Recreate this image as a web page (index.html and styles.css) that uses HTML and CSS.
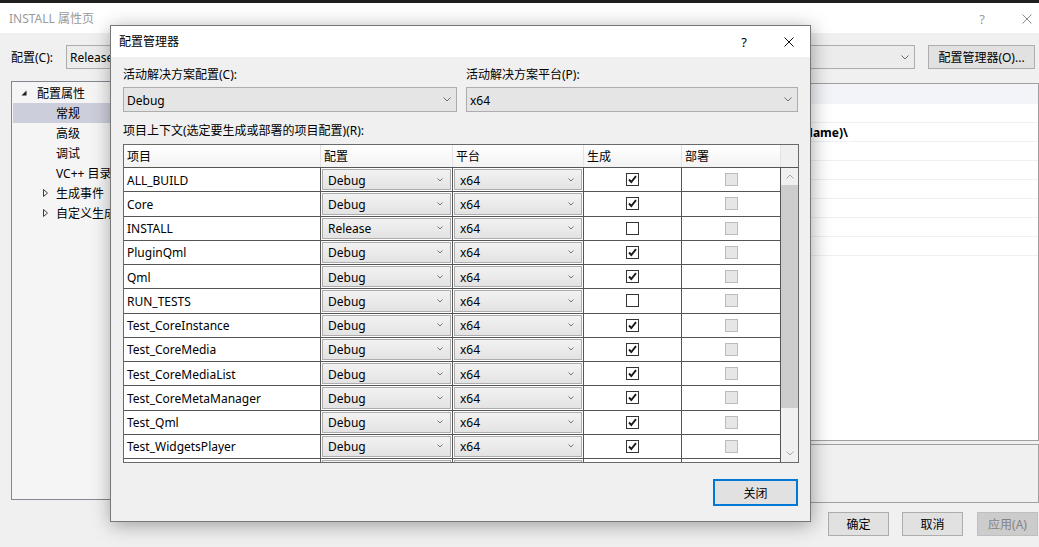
FILE: index.html
```html
<!DOCTYPE html>
<html lang="zh-CN">
<head>
<meta charset="utf-8">
<title>INSTALL 属性页</title>
<link rel="stylesheet" href="styles.css">
</head>
<body>
<div class="topstrip"></div>
<div class="win">
  <div class="win-title">
    <span class="win-title-text">INSTALL 属性页</span>
    <span class="win-help">?</span>
    <svg class="win-close" width="10" height="10" viewBox="0 0 10 10"><path d="M0.5 0.5 L9.5 9.5 M9.5 0.5 L0.5 9.5" stroke="#8a8a8a" stroke-width="1" fill="none"/></svg>
  </div>
  <div class="win-body">
    <div class="cfg-row">
      <span class="cfg-label">配置(C):</span>
      <div class="combo combo-main"><span class="combo-main-text">Release</span><svg class="chev" width="8" height="5" viewBox="0 0 8 5"><path d="M0.5 0.5 L4 4 L7.5 0.5" stroke="#6d6d6d" fill="none"/></svg></div>
      <button class="btn btn-cfgmgr">配置管理器(O)...</button>
    </div>
    <div class="main-row">
      <div class="tree">
        <div class="tree-item lvl0"><svg class="tri-open" width="6" height="6" viewBox="0 0 6 6"><polygon points="5.5,0.5 5.5,5.5 0.5,5.5" fill="#1e1e1e"/></svg><span class="tl">配置属性</span></div>
        <div class="tree-item lvl1 selected"><span class="tl">常规</span></div>
        <div class="tree-item lvl1"><span class="tl">高级</span></div>
        <div class="tree-item lvl1"><span class="tl">调试</span></div>
        <div class="tree-item lvl1"><span class="tl">VC++ 目录</span></div>
        <div class="tree-item lvl1c"><svg class="tri-closed" width="5" height="8" viewBox="0 0 5 8"><polygon points="0.5,0.5 4.5,4 0.5,7.5" fill="none" stroke="#3c3c3c"/></svg><span class="tl">生成事件</span></div>
        <div class="tree-item lvl1c"><svg class="tri-closed" width="5" height="8" viewBox="0 0 5 8"><polygon points="0.5,0.5 4.5,4 0.5,7.5" fill="none" stroke="#3c3c3c"/></svg><span class="tl">自定义生成步骤</span></div>
      </div>
      <div class="right-col">
        <div class="grid">
          <div class="grid-cat"></div>
          <div class="grid-row"></div>
          <div class="grid-row"><span class="gval bold">$(ConfigurationName)\</span></div>
          <div class="grid-row"></div>
          <div class="grid-row"></div>
          <div class="grid-row"></div>
          <div class="grid-row"></div>
          <div class="grid-row"></div>
          <div class="grid-row"></div>
        </div>
        <div class="desc"></div>
      </div>
    </div>
    <div class="btn-row">
      <button class="btn btn-main">确定</button>
      <button class="btn btn-main btn-cancel">取消</button>
      <button class="btn btn-main btn-disabled">应用(A)</button>
    </div>
  </div>
</div>

<div class="dialog">
  <div class="dlg-title">
    <span class="dlg-title-text">配置管理器</span>
    <span class="dlg-help">?</span>
    <svg class="dlg-close" width="10" height="10" viewBox="0 0 10 10"><path d="M0.5 0.5 L9.5 9.5 M9.5 0.5 L0.5 9.5" stroke="#111" stroke-width="1" fill="none"/></svg>
  </div>
  <div class="dlg-body">
    <div class="sol-row">
      <div class="sol-col sol-left">
        <div class="lbl">活动解决方案配置(C):</div>
        <div class="combo combo-sol"><span>Debug</span><svg class="chev" width="8" height="5" viewBox="0 0 8 5"><path d="M0.5 0.5 L4 4 L7.5 0.5" stroke="#6d6d6d" fill="none"/></svg></div>
      </div>
      <div class="sol-col sol-right">
        <div class="lbl">活动解决方案平台(P):</div>
        <div class="combo combo-sol"><span>x64</span><svg class="chev" width="8" height="5" viewBox="0 0 8 5"><path d="M0.5 0.5 L4 4 L7.5 0.5" stroke="#6d6d6d" fill="none"/></svg></div>
      </div>
    </div>
    <div class="ctx-label">项目上下文(选定要生成或部署的项目配置)(R):</div>
    <div class="ptable">
      <div class="phead">
        <div class="hc c1">项目</div>
        <div class="hc c2">配置</div>
        <div class="hc c3">平台</div>
        <div class="hc c4">生成</div>
        <div class="hc c5">部署</div>
        <div class="hcorner"></div>
      </div>
      <div class="pbody">
        <div class="prows">
          <div class="prow"><div class="pc c1 pname">ALL_BUILD</div><div class="pc c2 pcombo"><div class="cc"><span>Debug</span><svg width="6" height="4" viewBox="0 0 6 4"><path d="M0.5 0.5 L3 3 L5.5 0.5" stroke="#777" fill="none"/></svg></div></div><div class="pc c3 pcombo"><div class="cc"><span>x64</span><svg width="6" height="4" viewBox="0 0 6 4"><path d="M0.5 0.5 L3 3 L5.5 0.5" stroke="#777" fill="none"/></svg></div></div><div class="pc c4 pchk"><span class="cb on"><svg width="11" height="11" viewBox="0 0 11 11"><path d="M2 5.5 L4.3 8 L9 2.2" stroke="#1a1a1a" stroke-width="1.9" fill="none"/></svg></span></div><div class="pc c5 pchk"><span class="cb dis"></span></div></div>
          <div class="prow"><div class="pc c1 pname">Core</div><div class="pc c2 pcombo"><div class="cc"><span>Debug</span><svg width="6" height="4" viewBox="0 0 6 4"><path d="M0.5 0.5 L3 3 L5.5 0.5" stroke="#777" fill="none"/></svg></div></div><div class="pc c3 pcombo"><div class="cc"><span>x64</span><svg width="6" height="4" viewBox="0 0 6 4"><path d="M0.5 0.5 L3 3 L5.5 0.5" stroke="#777" fill="none"/></svg></div></div><div class="pc c4 pchk"><span class="cb on"><svg width="11" height="11" viewBox="0 0 11 11"><path d="M2 5.5 L4.3 8 L9 2.2" stroke="#1a1a1a" stroke-width="1.9" fill="none"/></svg></span></div><div class="pc c5 pchk"><span class="cb dis"></span></div></div>
          <div class="prow"><div class="pc c1 pname">INSTALL</div><div class="pc c2 pcombo"><div class="cc"><span>Release</span><svg width="6" height="4" viewBox="0 0 6 4"><path d="M0.5 0.5 L3 3 L5.5 0.5" stroke="#777" fill="none"/></svg></div></div><div class="pc c3 pcombo"><div class="cc"><span>x64</span><svg width="6" height="4" viewBox="0 0 6 4"><path d="M0.5 0.5 L3 3 L5.5 0.5" stroke="#777" fill="none"/></svg></div></div><div class="pc c4 pchk"><span class="cb"></span></div><div class="pc c5 pchk"><span class="cb dis"></span></div></div>
          <div class="prow"><div class="pc c1 pname">PluginQml</div><div class="pc c2 pcombo"><div class="cc"><span>Debug</span><svg width="6" height="4" viewBox="0 0 6 4"><path d="M0.5 0.5 L3 3 L5.5 0.5" stroke="#777" fill="none"/></svg></div></div><div class="pc c3 pcombo"><div class="cc"><span>x64</span><svg width="6" height="4" viewBox="0 0 6 4"><path d="M0.5 0.5 L3 3 L5.5 0.5" stroke="#777" fill="none"/></svg></div></div><div class="pc c4 pchk"><span class="cb on"><svg width="11" height="11" viewBox="0 0 11 11"><path d="M2 5.5 L4.3 8 L9 2.2" stroke="#1a1a1a" stroke-width="1.9" fill="none"/></svg></span></div><div class="pc c5 pchk"><span class="cb dis"></span></div></div>
          <div class="prow"><div class="pc c1 pname">Qml</div><div class="pc c2 pcombo"><div class="cc"><span>Debug</span><svg width="6" height="4" viewBox="0 0 6 4"><path d="M0.5 0.5 L3 3 L5.5 0.5" stroke="#777" fill="none"/></svg></div></div><div class="pc c3 pcombo"><div class="cc"><span>x64</span><svg width="6" height="4" viewBox="0 0 6 4"><path d="M0.5 0.5 L3 3 L5.5 0.5" stroke="#777" fill="none"/></svg></div></div><div class="pc c4 pchk"><span class="cb on"><svg width="11" height="11" viewBox="0 0 11 11"><path d="M2 5.5 L4.3 8 L9 2.2" stroke="#1a1a1a" stroke-width="1.9" fill="none"/></svg></span></div><div class="pc c5 pchk"><span class="cb dis"></span></div></div>
          <div class="prow"><div class="pc c1 pname">RUN_TESTS</div><div class="pc c2 pcombo"><div class="cc"><span>Debug</span><svg width="6" height="4" viewBox="0 0 6 4"><path d="M0.5 0.5 L3 3 L5.5 0.5" stroke="#777" fill="none"/></svg></div></div><div class="pc c3 pcombo"><div class="cc"><span>x64</span><svg width="6" height="4" viewBox="0 0 6 4"><path d="M0.5 0.5 L3 3 L5.5 0.5" stroke="#777" fill="none"/></svg></div></div><div class="pc c4 pchk"><span class="cb"></span></div><div class="pc c5 pchk"><span class="cb dis"></span></div></div>
          <div class="prow"><div class="pc c1 pname">Test_CoreInstance</div><div class="pc c2 pcombo"><div class="cc"><span>Debug</span><svg width="6" height="4" viewBox="0 0 6 4"><path d="M0.5 0.5 L3 3 L5.5 0.5" stroke="#777" fill="none"/></svg></div></div><div class="pc c3 pcombo"><div class="cc"><span>x64</span><svg width="6" height="4" viewBox="0 0 6 4"><path d="M0.5 0.5 L3 3 L5.5 0.5" stroke="#777" fill="none"/></svg></div></div><div class="pc c4 pchk"><span class="cb on"><svg width="11" height="11" viewBox="0 0 11 11"><path d="M2 5.5 L4.3 8 L9 2.2" stroke="#1a1a1a" stroke-width="1.9" fill="none"/></svg></span></div><div class="pc c5 pchk"><span class="cb dis"></span></div></div>
          <div class="prow"><div class="pc c1 pname">Test_CoreMedia</div><div class="pc c2 pcombo"><div class="cc"><span>Debug</span><svg width="6" height="4" viewBox="0 0 6 4"><path d="M0.5 0.5 L3 3 L5.5 0.5" stroke="#777" fill="none"/></svg></div></div><div class="pc c3 pcombo"><div class="cc"><span>x64</span><svg width="6" height="4" viewBox="0 0 6 4"><path d="M0.5 0.5 L3 3 L5.5 0.5" stroke="#777" fill="none"/></svg></div></div><div class="pc c4 pchk"><span class="cb on"><svg width="11" height="11" viewBox="0 0 11 11"><path d="M2 5.5 L4.3 8 L9 2.2" stroke="#1a1a1a" stroke-width="1.9" fill="none"/></svg></span></div><div class="pc c5 pchk"><span class="cb dis"></span></div></div>
          <div class="prow"><div class="pc c1 pname">Test_CoreMediaList</div><div class="pc c2 pcombo"><div class="cc"><span>Debug</span><svg width="6" height="4" viewBox="0 0 6 4"><path d="M0.5 0.5 L3 3 L5.5 0.5" stroke="#777" fill="none"/></svg></div></div><div class="pc c3 pcombo"><div class="cc"><span>x64</span><svg width="6" height="4" viewBox="0 0 6 4"><path d="M0.5 0.5 L3 3 L5.5 0.5" stroke="#777" fill="none"/></svg></div></div><div class="pc c4 pchk"><span class="cb on"><svg width="11" height="11" viewBox="0 0 11 11"><path d="M2 5.5 L4.3 8 L9 2.2" stroke="#1a1a1a" stroke-width="1.9" fill="none"/></svg></span></div><div class="pc c5 pchk"><span class="cb dis"></span></div></div>
          <div class="prow"><div class="pc c1 pname">Test_CoreMetaManager</div><div class="pc c2 pcombo"><div class="cc"><span>Debug</span><svg width="6" height="4" viewBox="0 0 6 4"><path d="M0.5 0.5 L3 3 L5.5 0.5" stroke="#777" fill="none"/></svg></div></div><div class="pc c3 pcombo"><div class="cc"><span>x64</span><svg width="6" height="4" viewBox="0 0 6 4"><path d="M0.5 0.5 L3 3 L5.5 0.5" stroke="#777" fill="none"/></svg></div></div><div class="pc c4 pchk"><span class="cb on"><svg width="11" height="11" viewBox="0 0 11 11"><path d="M2 5.5 L4.3 8 L9 2.2" stroke="#1a1a1a" stroke-width="1.9" fill="none"/></svg></span></div><div class="pc c5 pchk"><span class="cb dis"></span></div></div>
          <div class="prow"><div class="pc c1 pname">Test_Qml</div><div class="pc c2 pcombo"><div class="cc"><span>Debug</span><svg width="6" height="4" viewBox="0 0 6 4"><path d="M0.5 0.5 L3 3 L5.5 0.5" stroke="#777" fill="none"/></svg></div></div><div class="pc c3 pcombo"><div class="cc"><span>x64</span><svg width="6" height="4" viewBox="0 0 6 4"><path d="M0.5 0.5 L3 3 L5.5 0.5" stroke="#777" fill="none"/></svg></div></div><div class="pc c4 pchk"><span class="cb on"><svg width="11" height="11" viewBox="0 0 11 11"><path d="M2 5.5 L4.3 8 L9 2.2" stroke="#1a1a1a" stroke-width="1.9" fill="none"/></svg></span></div><div class="pc c5 pchk"><span class="cb dis"></span></div></div>
          <div class="prow"><div class="pc c1 pname">Test_WidgetsPlayer</div><div class="pc c2 pcombo"><div class="cc"><span>Debug</span><svg width="6" height="4" viewBox="0 0 6 4"><path d="M0.5 0.5 L3 3 L5.5 0.5" stroke="#777" fill="none"/></svg></div></div><div class="pc c3 pcombo"><div class="cc"><span>x64</span><svg width="6" height="4" viewBox="0 0 6 4"><path d="M0.5 0.5 L3 3 L5.5 0.5" stroke="#777" fill="none"/></svg></div></div><div class="pc c4 pchk"><span class="cb on"><svg width="11" height="11" viewBox="0 0 11 11"><path d="M2 5.5 L4.3 8 L9 2.2" stroke="#1a1a1a" stroke-width="1.9" fill="none"/></svg></span></div><div class="pc c5 pchk"><span class="cb dis"></span></div></div>
          <div class="prow"><div class="pc c1 pname"></div><div class="pc c2 pcombo"><div class="cc"></div></div><div class="pc c3 pcombo"><div class="cc"></div></div><div class="pc c4 pchk"></div><div class="pc c5 pchk"></div></div>
        </div>
        <div class="vscroll">
          <div class="sb-btn"><svg width="8" height="5" viewBox="0 0 8 5"><path d="M0.5 4.5 L4 1 L7.5 4.5" stroke="#a6a6a6" fill="none"/></svg></div>
          <div class="sb-thumb"></div>
          <div class="sb-track"></div>
          <div class="sb-btn"><svg width="8" height="5" viewBox="0 0 8 5"><path d="M0.5 0.5 L4 4 L7.5 0.5" stroke="#a6a6a6" fill="none"/></svg></div>
        </div>
      </div>
    </div>
    <div class="dlg-footer">
      <button class="btn btn-default">关闭</button>
    </div>
  </div>
</div>
</body>
</html>
```

FILE: styles.css
```css
* { box-sizing: border-box; }
html, body { margin: 0; padding: 0; }
body {
  width: 1039px;
  height: 547px;
  overflow: hidden;
  position: relative;
  background: #f0f0f0;
  font-family: "Noto Sans", "Noto Sans CJK SC", sans-serif;
  font-size: 12px;
  line-height: 16px;
  color: #000;
}
button { font: inherit; color: inherit; margin: 0; padding: 0; }

.topstrip { height: 3px; background: #1f1f1f; }

/* main window */
.win-title {
  height: 30px;
  background: #fff;
  display: flex;
  align-items: center;
  padding: 2px 7px 0 9px;
}
.win-title-text { flex: 1; color: #9a9a9a; }
.win-help { width: 24px; text-align: center; color: #9a9a9a; font-size: 13px; margin-right: 28px; }
.win-close { display: block; }

.win-body { padding: 12px 0 0 11px; }

.cfg-row { display: flex; align-items: center; height: 24px; }
.cfg-label { width: 55px; padding-top: 2px; }
.combo {
  display: flex;
  align-items: center;
  justify-content: space-between;
  border: 1px solid #adadad;
  background: #e5e5e5;
  padding: 2px 5px 0 3px;
}
.combo-main { width: 849px; height: 24px; background: #ececec; }
.combo-main-text { width: 42px; overflow: hidden; white-space: nowrap; }
.chev { display: block; margin-top: -2px; }

.btn {
  border: 1px solid #adadad;
  background: #e1e1e1;
  display: flex;
  align-items: center;
  justify-content: center;
  padding-top: 2px;
}
.btn-cfgmgr { margin-left: 13px; width: 107px; height: 24px; }

.main-row { display: flex; align-items: flex-start; margin-top: 12px; }
.tree {
  width: 290px;
  height: 419px;
  border: 1px solid #828790;
  background: #f5f5f5;
  padding: 1px;
}
.tree-item { height: 20px; display: flex; align-items: center; white-space: nowrap; padding-top: 2px; }
.tree-item svg { margin-top: -2px; }
.tl { max-width: 58px; overflow: hidden; white-space: nowrap; }
.lvl0 { padding-left: 8px; }
.lvl0 svg { margin-right: 10px; }
.lvl1 { padding-left: 43px; }
.lvl1c { padding-left: 30px; }
.lvl1c svg { margin-right: 8px; }
.selected { background: #cccedb; }

.right-col { flex: 1; margin-left: 4px; margin-top: 2px; display: flex; flex-direction: column; }
.grid {
  height: 358px;
  border: 1px solid #a0a0a0;
  background: #fff;
}
.grid-cat { height: 20px; background: #f2f4f9; }
.grid-row {
  height: 19px;
  border-bottom: 1px solid #eef0f5;
  display: flex;
  align-items: center;
  padding-top: 2px;
  white-space: nowrap;
}
.gval { margin-left: 368px; width: 174px; text-align: right; }
.bold { font-weight: bold; }
.desc { margin-top: 3px; height: 59px; border: 1px solid #a0a0a0; background: #f0f0f0; }

.btn-row { display: flex; justify-content: flex-end; margin-top: 9px; padding-right: 1px; }
.btn-main { width: 61px; height: 24px; }
.btn-cancel { margin-left: 13px; }
.btn-disabled { margin-left: 14px; background: #cccccc; border-color: #bfbfbf; color: #838383; }

/* dialog */
.dialog {
  position: absolute;
  left: 110px;
  top: 25px;
  width: 701px;
  height: 497px;
  border: 1px solid #777;
  background: #f0f0f0;
  box-shadow: 1px 3px 18px rgba(0, 0, 0, 0.35);
}
.dlg-title {
  height: 31px;
  background: #fff;
  display: flex;
  align-items: center;
  padding: 0 16px 0 8px;
}
.dlg-title-text { flex: 1; }
.dlg-help { width: 16px; text-align: center; font-size: 13px; margin-right: 32px; }
.dlg-close { display: block; }

.dlg-body { padding: 10px 11px 0 12px; }
.sol-row { display: flex; }
.sol-left { width: 334px; }
.sol-right { width: 332px; margin-left: 9px; }
.lbl { margin-bottom: 4px; }
.combo-sol { height: 25px; }

.ctx-label { margin-top: 11px; margin-bottom: 5px; }

.ptable {
  width: 676px;
  height: 319px;
  border: 1px solid #6a6a6a;
  background: #fff;
  display: flex;
  flex-direction: column;
  overflow: hidden;
}
.phead { display: flex; height: 23px; border-bottom: 1px solid #555; flex-shrink: 0; }
.c1 { width: 197px; }
.c2 { width: 132px; }
.c3 { width: 131px; }
.c4 { width: 98px; }
.c5 { width: 99px; }
.hc {
  height: 22px;
  padding: 2px 0 0 3px;
  display: flex;
  align-items: center;
  background: linear-gradient(#ffffff, #f3f3f3);
  border-right: 1px solid #e2e2e2;
}
.hcorner { flex: 1; background: #f0f0f0; }

.pbody { flex: 1; display: flex; overflow: hidden; }
.prows { width: 657px; overflow: hidden; }
.prow { display: flex; height: 24.25px; border-bottom: 1px solid #555; }
.pc { border-right: 1px solid #555; display: flex; align-items: center; flex-shrink: 0; }
.pname { padding: 2px 0 0 3px; white-space: nowrap; overflow: hidden; }
.pcombo { padding: 1px; align-items: stretch; }
.cc {
  flex: 1;
  border: 1px solid #acacac;
  background: linear-gradient(#f2f2f2, #e3e3e3);
  display: flex;
  align-items: center;
  justify-content: space-between;
  padding: 2px 7px 0 5px;
}
.cc svg { display: block; margin-top: -2px; }
.pchk { justify-content: center; }
.cb {
  width: 13px;
  height: 13px;
  border: 1px solid #333;
  background: #fff;
  display: block;
}
.cb svg { display: block; }
.cb.dis { border-color: #bcbcbc; background: #e6e6e6; }

.vscroll { width: 17px; background: #f0f0f0; display: flex; flex-direction: column; }
.sb-btn { height: 17px; display: flex; align-items: center; justify-content: center; flex-shrink: 0; }
.sb-thumb { height: 223px; background: #cdcdcd; flex-shrink: 0; }
.sb-track { flex: 1; }

.dlg-footer { display: flex; justify-content: flex-end; margin-top: 16px; padding-right: 1px; }
.btn-default { width: 85px; height: 27px; border: 2px solid #0078d7; background: #e1e1e1; }
```
